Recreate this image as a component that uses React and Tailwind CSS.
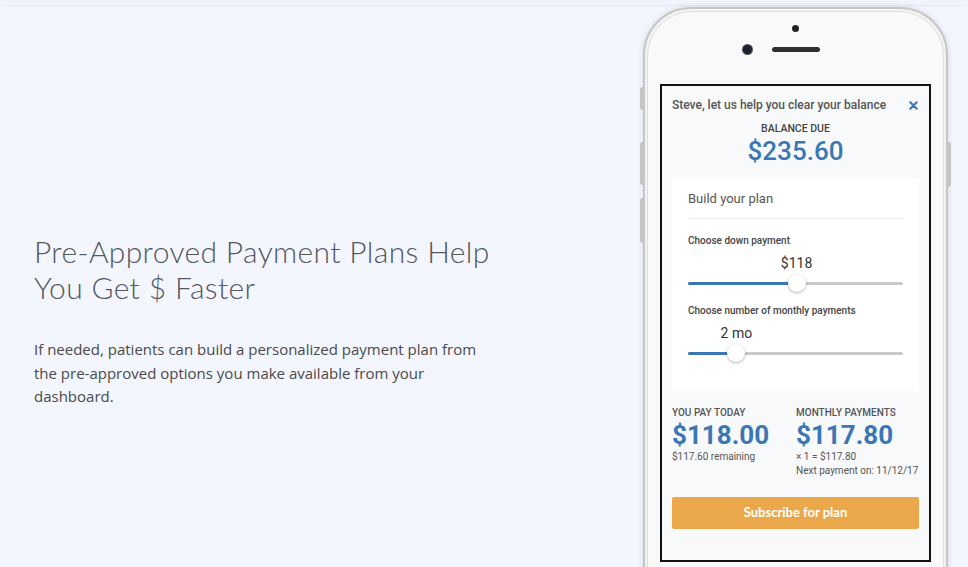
import React from "react";

// Slider row with a value label sitting above the thumb
const PlanSlider = ({ label, value, percent }) => {
  return (
    <div>
      <p className="text-[10px] leading-[12px] font-medium text-[#444]">{label}</p>
      <div className="relative mt-[7px] h-[18px]">
        <span
          className="absolute top-0 -translate-x-1/2 text-[14px] leading-[18px] text-[#333]"
          style={{ left: `${percent}%` }}
        >
          {value}
        </span>
      </div>
      <div className="relative mt-[1px] h-[20px]">
        <div className="absolute left-0 right-0 top-[9px] h-[3px] rounded-full bg-[#c9c9c9]" />
        <div
          className="absolute left-0 top-[9px] h-[3px] rounded-full bg-[#3a77b4]"
          style={{ width: `${percent}%` }}
        />
        <div
          className="absolute top-[1px] h-[18px] w-[18px] -translate-x-1/2 rounded-full bg-white shadow-[0_1px_3px_rgba(0,0,0,0.3)]"
          style={{ left: `${percent}%` }}
        />
      </div>
    </div>
  );
};

const Phone = () => {
  return (
    <div className="relative w-[305px] shrink-0 mt-[2px]">
      {/* side buttons */}
      <div className="absolute left-[-3px] top-[80px] h-[23px] w-[3px] rounded-l bg-[#c4c4c4]" />
      <div className="absolute left-[-3px] top-[135px] h-[43px] w-[3px] rounded-l bg-[#c4c4c4]" />
      <div className="absolute left-[-3px] top-[191px] h-[45px] w-[3px] rounded-l bg-[#c4c4c4]" />
      <div className="absolute right-[-3px] top-[135px] h-[45px] w-[3px] rounded-r bg-[#c4c4c4]" />

      <div className="h-[600px] rounded-t-[48px] border-2 border-[#c6c6c6] bg-[#f2f2f2] p-[2px] shadow-[0_0_6px_rgba(0,0,0,0.12)]">
        <div className="h-full rounded-t-[45px] border border-[#dedede] bg-[#f9f9f9] px-[12px]">
          {/* earpiece area */}
          <div className="flex h-[72px] flex-col items-center pt-[13px]">
            <div className="h-[7px] w-[7px] rounded-full bg-[#222]" />
            <div className="mt-[13px] flex items-center gap-[20px]">
              <div className="h-[9px] w-[9px] rounded-full bg-[#1c2030] ring-1 ring-[#555]" />
              <div className="h-[5px] w-[48px] rounded-full bg-[#2f2f2f]" />
              <div className="h-[9px] w-[9px]" />
            </div>
          </div>

          {/* screen */}
          <div className="h-[478px] border-2 border-[#111] bg-[#f8f9fb] px-[10px] pt-[11px] font-['Roboto',sans-serif]">
            <div className="flex items-center justify-between">
              <p className="text-[12px] leading-[16px] font-medium text-[#555]">
                Steve, let us help you clear your balance
              </p>
              <svg width="9" height="9" viewBox="0 0 10 10" className="mr-[1px]">
                <path d="M1.5 1.5 L8.5 8.5 M8.5 1.5 L1.5 8.5" stroke="#3a77b4" strokeWidth="2.4" strokeLinecap="round" />
              </svg>
            </div>

            <p className="mt-[10px] text-center text-[10.5px] leading-[12px] font-medium text-[#444]">BALANCE DUE</p>
            <p className="mt-[1px] text-center text-[26px] leading-[30px] font-medium text-[#3a77b4]">$235.60</p>

            <div className="mt-[13px] bg-white px-[16px] pt-[11px] pb-[28px]">
              <div className="border-b border-[#eceef2] pb-[10px]">
                <p className="text-[13px] leading-[18px] text-[#555]">Build your plan</p>
              </div>
              <div className="mt-[16px]">
                <PlanSlider label="Choose down payment" value="$118" percent={50.5} />
              </div>
              <div className="mt-[12px]">
                <PlanSlider label="Choose number of monthly payments" value="2 mo" percent={22.5} />
              </div>
            </div>

            <div className="mt-[16px] flex">
              <div className="w-[124px]">
                <p className="text-[10px] leading-[12px] font-medium text-[#555]">YOU PAY TODAY</p>
                <p className="mt-[2px] text-[26px] leading-[28px] font-bold text-[#3a77b4]">$118.00</p>
                <p className="mt-[1px] text-[10px] leading-[13px] text-[#555]">$117.60 remaining</p>
              </div>
              <div>
                <p className="text-[10px] leading-[12px] font-medium text-[#555]">MONTHLY PAYMENTS</p>
                <p className="mt-[2px] text-[26px] leading-[28px] font-bold text-[#3a77b4]">$117.80</p>
                <p className="mt-[1px] text-[10px] leading-[13px] text-[#555]">× 1 = $117.80</p>
                <p className="mt-[1px] text-[10px] leading-[13px] text-[#555]">Next payment on: 11/12/17</p>
              </div>
            </div>

            <button className="mt-[20px] h-[32px] w-full rounded-[2px] bg-[#eba84a] font-['Lato',sans-serif] text-[13px] font-bold text-white">
              Subscribe for plan
            </button>
          </div>
        </div>
      </div>
    </div>
  );
};

const App = () => {
  return (
    <div className="h-[567px] w-full overflow-hidden bg-[#f3f6fe]">
      {/* top strip */}
      <div className="h-[5px] bg-[#f1f4fd] shadow-[0_1px_2px_rgba(0,0,0,0.06)]" />

      <div className="flex">
        {/* copy */}
        <div className="w-[643px] shrink-0 pl-[34px] pt-[228px]">
          <h1 className="font-['Lato',sans-serif] text-[30px] leading-[36px] font-light tracking-[0.35px] text-[#54585d]">
            Pre-Approved Payment Plans Help
            <br />
            You Get $ Faster
          </h1>
          <p className="mt-[33px] w-[460px] font-['Open_Sans',sans-serif] text-[15px] leading-[23.5px] text-[#4a4a4a]">
            If needed, patients can build a personalized payment plan from the pre-approved options you make available from your dashboard.
          </p>
        </div>

        <Phone />
      </div>
    </div>
  );
};

export default App;
